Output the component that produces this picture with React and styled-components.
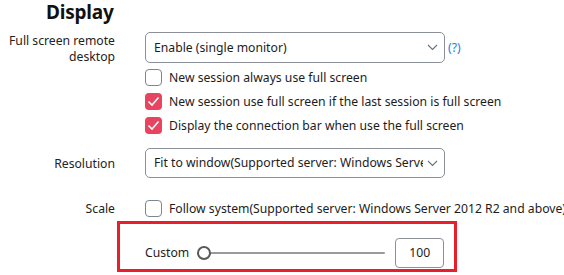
import React from 'react';
import styled, { createGlobalStyle } from 'styled-components';

const GlobalStyle = createGlobalStyle`
    html, body {
        margin: 0;
        padding: 0;
        background: #ffffff;
        overflow: hidden;
    }
    body {
        font-family: "Noto Sans", "Liberation Sans", sans-serif;
        font-size: 12.2px;
        color: #1c1c1c;
    }
`;

const Page = styled.div`
    width: 564px;
    height: 275px;
    overflow: hidden;
`;

const Heading = styled.h2`
    margin: 0 0 0 46px;
    padding-top: 1px;
    font-size: 19px;
    font-weight: 700;
    letter-spacing: -0.2px;
    line-height: 22px;
    height: 31px;
    color: #111;
`;

const Form = styled.div`
    display: grid;
    grid-template-columns: 115px 1fr;
    column-gap: 30px;
    align-items: start;
`;

const Label = styled.div`
    text-align: right;
    line-height: 16px;
    padding-top: ${({top}) => top || 0}px;
    color: #222;
`;

const Control = styled.div`
    display: flex;
    flex-direction: column;
    gap: 6px;
    margin-bottom: ${({after}) => after || 0}px;
    min-width: 0;
`;

const SelectRow = styled.div`
    display: flex;
    align-items: center;
    gap: 3px;
`;

const SelectBox = styled.div`
    box-sizing: border-box;
    width: 300px;
    height: ${({h}) => h || 31}px;
    border: 1px solid #8b9099;
    border-radius: 5px;
    display: flex;
    align-items: center;
    padding: 0 6px 0 8px;
    gap: 4px;
`;

const SelectText = styled.span`
    flex: 1;
    white-space: nowrap;
    overflow: hidden;
    line-height: 16px;
`;

const Help = styled.span`
    color: #2b7fd8;
`;

const CheckList = styled.div`
    display: flex;
    flex-direction: column;
    gap: 7px;
`;

const CheckRow = styled.label`
    display: flex;
    align-items: center;
    gap: 7px;
    white-space: nowrap;
    line-height: 17px;
`;

const Box = styled.span`
    box-sizing: border-box;
    flex: none;
    width: 17px;
    height: 17px;
    border-radius: 4px;
    border: ${({on}) => on ? 'none' : '1px solid #7d8593'};
    background: ${({on}) => on ? '#e8435f' : '#fff'};
    display: flex;
    align-items: center;
    justify-content: center;
`;

const Highlight = styled.div`
    margin-left: 117px;
    margin-top: 4px;
    box-sizing: border-box;
    width: 340px;
    height: 51px;
    border: 3px solid #e81e2b;
    display: flex;
    align-items: center;
    padding: 12px 10px 0 25px;
`;

const SliderLabel = styled.span`
    margin-right: 8px;
`;

const Slider = styled.div`
    position: relative;
    width: 190px;
    height: 14px;
    display: flex;
    align-items: center;
`;

const Track = styled.div`
    flex: 1;
    height: 2px;
    background: #9a9a9a;
    border-radius: 1px;
`;

const Thumb = styled.div`
    position: absolute;
    left: 0;
    top: 0;
    box-sizing: border-box;
    width: 14px;
    height: 14px;
    border-radius: 50%;
    border: 2px solid #5a5a5a;
    background: #fff;
`;

const NumberBox = styled.div`
    box-sizing: border-box;
    margin-left: 10px;
    width: 49px;
    height: 30px;
    border: 1px solid #8b9099;
    border-radius: 4px;
    display: flex;
    align-items: center;
    justify-content: center;
`;

const Chevron = () => (
    <svg width="11" height="7" viewBox="0 0 11 7">
        <path d="M1 1 L5.5 5.5 L10 1" fill="none" stroke="#6b6f76" strokeWidth="1.1" />
    </svg>
);

const Tick = () => (
    <svg width="13" height="11" viewBox="0 0 13 11">
        <path d="M1.5 5.5 L5 9 L11.5 1.5" fill="none" stroke="#fff" strokeWidth="1.6" />
    </svg>
);

const Check = ({on, children}) => (
    <CheckRow>
        <Box on={on}>{on && <Tick />}</Box>
        <span>{children}</span>
    </CheckRow>
);

export default function App() {
    return (
        <Page>
            <GlobalStyle />
            <Heading>Display</Heading>
            <Form>
                <Label top={1}>Full screen remote desktop</Label>
                <Control after={14}>
                    <SelectRow>
                        <SelectBox>
                            <SelectText>Enable (single monitor)</SelectText>
                            <Chevron />
                        </SelectBox>
                        <Help>(?)</Help>
                    </SelectRow>
                    <CheckList>
                        <Check>New session always use full screen</Check>
                        <Check on>New session use full screen if the last session is full screen</Check>
                        <Check on>Display the connection bar when use the full screen</Check>
                    </CheckList>
                </Control>

                <Label top={8}>Resolution</Label>
                <Control after={22}>
                    <SelectBox h={30}>
                        <SelectText>Fit to window(Supported server: Windows Server 2012 R2 and above)</SelectText>
                        <Chevron />
                    </SelectBox>
                </Control>

                <Label top={1}>Scale</Label>
                <Control>
                    <Check>Follow system(Supported server: Windows Server 2012 R2 and above)</Check>
                </Control>
            </Form>
            <Highlight>
                <SliderLabel>Custom</SliderLabel>
                <Slider>
                    <Track />
                    <Thumb />
                </Slider>
                <NumberBox>100</NumberBox>
            </Highlight>
        </Page>
    );
}
